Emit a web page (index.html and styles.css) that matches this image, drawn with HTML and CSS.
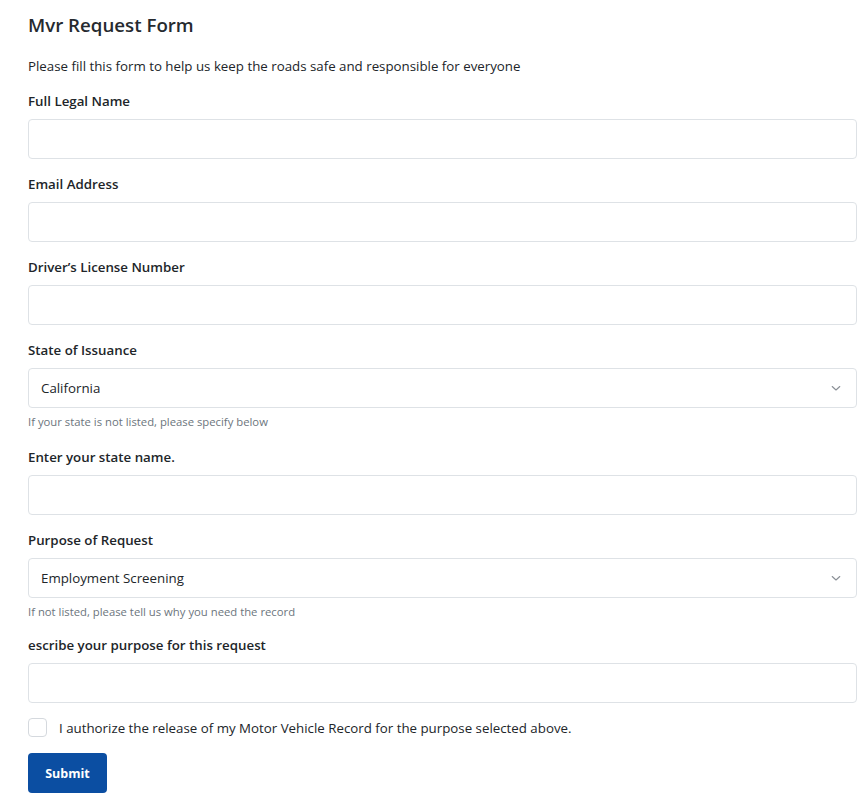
FILE: index.html
```html
<!DOCTYPE html>
<html lang="en">
<head>
<meta charset="utf-8">
<title>Mvr Request Form</title>
<link rel="stylesheet" href="styles.css">
</head>
<body>
<form class="form">
  <h1 class="title">Mvr Request Form</h1>
  <p class="intro">Please fill this form to help us keep the roads safe and responsible for everyone</p>

  <div class="field">
    <label class="label">Full Legal Name</label>
    <input class="control" type="text">
  </div>

  <div class="field">
    <label class="label">Email Address</label>
    <input class="control" type="text">
  </div>

  <div class="field">
    <label class="label">Driver’s License Number</label>
    <input class="control" type="text">
  </div>

  <div class="field">
    <label class="label">State of Issuance</label>
    <div class="select">
      <span class="select-value">California</span>
      <svg class="chevron" width="12" height="12" viewBox="0 0 12 12"><path d="M2.2 4.5 L6 8 L9.8 4.5" fill="none" stroke="#8a8f96" stroke-width="1.1" stroke-linecap="round" stroke-linejoin="round"/></svg>
    </div>
    <div class="help">If your state is not listed, please specify below</div>
  </div>

  <div class="field">
    <label class="label">Enter your state name.</label>
    <input class="control" type="text">
  </div>

  <div class="field">
    <label class="label">Purpose of Request</label>
    <div class="select">
      <span class="select-value">Employment Screening</span>
      <svg class="chevron" width="12" height="12" viewBox="0 0 12 12"><path d="M2.2 4.5 L6 8 L9.8 4.5" fill="none" stroke="#8a8f96" stroke-width="1.1" stroke-linecap="round" stroke-linejoin="round"/></svg>
    </div>
    <div class="help help-tight">If not listed, please tell us why you need the record</div>
  </div>

  <div class="field">
    <label class="label">escribe your purpose for this request</label>
    <input class="control" type="text">
  </div>

  <div class="check-row">
    <span class="checkbox"></span>
    <span class="check-text">I authorize the release of my Motor Vehicle Record for the purpose selected above.</span>
  </div>

  <button class="submit" type="button">Submit</button>
</form>
</body>
</html>
```

FILE: styles.css
```css
* { box-sizing: border-box; }
html, body { margin: 0; padding: 0; background: #fff; }
body {
  font-family: "Open Sans", "Noto Sans", "Liberation Sans", sans-serif;
  color: #212529;
}
.form {
  padding: 13px 9px 0 28px;
  display: flex;
  flex-direction: column;
}
.title {
  margin: 0;
  font-size: 18.7px;
  font-weight: 600;
  line-height: 24px;
  color: #262a2f;
}
.intro {
  margin: 19px 0 0;
  font-size: 13.3px;
  line-height: 20px;
  color: #212529;
}
.field {
  display: flex;
  flex-direction: column;
  margin-top: 15px;
}
.label {
  font-size: 13.3px;
  font-weight: 600;
  line-height: 20px;
  color: #212529;
  margin-bottom: 8px;
}
.control {
  display: block;
  width: 100%;
  height: 40px;
  border: 1px solid #dee2e6;
  border-radius: 4px;
  background: #fff;
  font: inherit;
  padding: 0 12px;
  outline: none;
}
.select {
  height: 40px;
  border: 1px solid #dee2e6;
  border-radius: 4px;
  display: flex;
  align-items: center;
  justify-content: space-between;
  padding: 0 14px 0 12px;
}
.select-value {
  font-size: 13.3px;
  color: #212529;
}
.chevron { display: block; }
.help {
  margin-top: 6px;
  margin-bottom: 3px;
  font-size: 11.3px;
  line-height: 15px;
  color: #6c757d;
}
.help-tight { margin-bottom: 1px; }
.check-row {
  display: flex;
  align-items: center;
  margin-top: 15px;
  gap: 12px;
}
.checkbox {
  width: 19px;
  height: 19px;
  border: 1px solid #d5d9de;
  border-radius: 4px;
  background: #fff;
}
.check-text {
  font-size: 13.3px;
  color: #212529;
}
.submit {
  align-self: flex-start;
  margin-top: 16px;
  width: 79px;
  height: 40px;
  border: none;
  border-radius: 4px;
  background: #0b4ea2;
  color: #fff;
  font-family: inherit;
  font-size: 12.5px;
  font-weight: 700;
}
```
